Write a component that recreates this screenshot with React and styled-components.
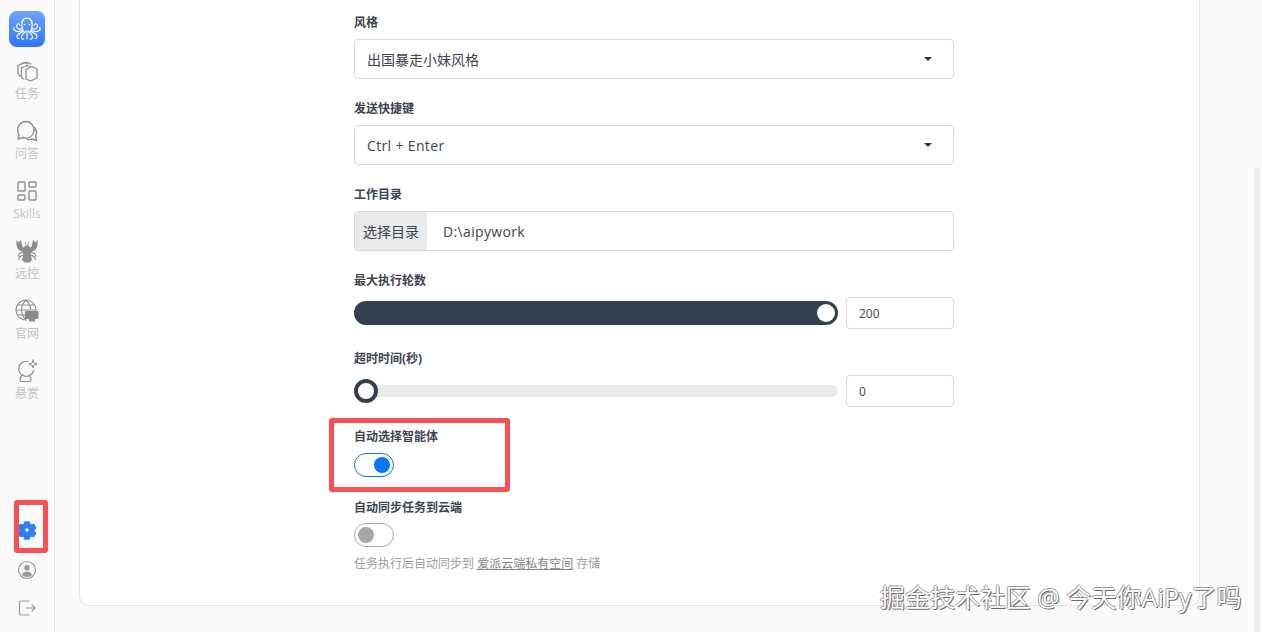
import React from 'react';
import styled, {createGlobalStyle} from 'styled-components';
import {LayoutDashboard} from 'lucide-react';

const GlobalStyle = createGlobalStyle`
    html, body {
        margin: 0;
        height: 100%;
        overflow: hidden;
        background: #fafafa;
    }
    * {
        box-sizing: border-box;
    }
    body {
        font-family: "Open Sans", "Noto Sans CJK SC", sans-serif;
    }
`;

const Shell = styled.div`
    display: flex;
    width: 1262px;
    height: 632px;
    position: relative;
    overflow: hidden;
`;

const Sidebar = styled.aside`
    width: 55px;
    flex: none;
    display: flex;
    flex-direction: column;
    align-items: center;
    padding-top: 11px;
    padding-bottom: 15px;
    background: #fafafa;
    border-right: 1px solid #e4e4e4;
`;

const Logo = styled.div`
    width: 36px;
    height: 36px;
    border-radius: 8px;
    background: linear-gradient(180deg, #6fa4fb 0%, #2f74fb 100%);
    display: flex;
    align-items: center;
    justify-content: center;
    margin-bottom: 12px;
`;

const NavList = styled.nav`
    display: flex;
    flex-direction: column;
    align-items: center;
    gap: 20px;
`;

const NavItem = styled.div`
    height: 40px;
    width: 40px;
    display: flex;
    flex-direction: column;
    align-items: center;
    color: #8f8f8f;
`;

const NavIcon = styled.div`
    width: 24px;
    height: 24px;
    flex: none;
    display: flex;
    align-items: center;
    justify-content: center;
`;

const NavLabel = styled.span`
    font-size: 12px;
    line-height: 16px;
    margin-top: 3px;
    color: #c2c2c2;
    white-space: nowrap;
`;

const BottomIcons = styled.div`
    margin-top: auto;
    display: flex;
    flex-direction: column;
    align-items: center;
    gap: 19px;
`;

const Main = styled.main`
    flex: 1;
    padding: 0 62px 26px 24px;
    background: #fafafa;
    display: flex;
`;

const Card = styled.section`
    flex: 1;
    background: #fff;
    border: 1px solid #e6e6e6;
    border-top: none;
    border-radius: 0 0 10px 10px;
    padding: 14px 0 0 274px;
`;

const Form = styled.div`
    width: 600px;
    display: flex;
    flex-direction: column;
`;

const Field = styled.div`
    display: flex;
    flex-direction: column;
    margin-bottom: ${(p) => p.$gap ?? 21}px;
`;

const Label = styled.label`
    font-size: 12px;
    line-height: 17px;
    font-weight: 700;
    color: #3d4451;
    margin-bottom: ${(p) => p.$gap ?? 8}px;
`;

const SelectBox = styled.div`
    height: 40px;
    border: 1px solid #d9d9d9;
    border-radius: 4px;
    padding: 0 21px 0 12px;
    display: flex;
    align-items: center;
    justify-content: space-between;
    font-size: 14px;
    color: #3d4451;
    background: #fff;
`;

const LatinValue = styled.span`
    letter-spacing: 0.35px;
`;

const Caret = styled.span`
    width: 0;
    height: 0;
    border-left: 4px solid transparent;
    border-right: 4px solid transparent;
    border-top: 4px solid #333;
`;

const InputGroup = styled.div`
    height: 40px;
    display: flex;
    border: 1px solid #d9d9d9;
    border-radius: 4px;
    overflow: hidden;
    font-size: 14px;
    color: #3d4451;
`;

const Addon = styled.div`
    width: 72px;
    background: #e9eaec;
    display: flex;
    align-items: center;
    justify-content: center;
`;

const PathValue = styled.div`
    padding-left: 16px;
    display: flex;
    align-items: center;
`;

const SliderRow = styled.div`
    display: flex;
    align-items: center;
    gap: 8px;
`;

const SliderBox = styled.div`
    width: 484px;
    height: 24px;
    position: relative;
    display: flex;
    align-items: center;
`;

const FullTrack = styled.div`
    width: 100%;
    height: 24px;
    border-radius: 12px;
    background: #343f4f;
`;

const EmptyTrack = styled.div`
    width: 100%;
    height: 12px;
    border-radius: 6px;
    background: #eaeaea;
`;

const KnobEnd = styled.span`
    position: absolute;
    right: 3px;
    top: 3px;
    width: 18px;
    height: 18px;
    border-radius: 50%;
    background: #fff;
`;

const KnobStart = styled.span`
    position: absolute;
    left: 0;
    top: 0;
    width: 24px;
    height: 24px;
    border-radius: 50%;
    background: #fff;
    border: 4px solid #343f4f;
`;

const NumberBox = styled.div`
    width: 108px;
    height: 32px;
    border: 1px solid #d9d9d9;
    border-radius: 4px;
    padding-left: 12px;
    display: flex;
    align-items: center;
    font-size: 12px;
    color: #3d4451;
`;

const Toggle = styled.div`
    width: 40px;
    height: 24px;
    border-radius: 12px;
    border: 1px solid ${(p) => (p.$on ? '#0d72ea' : '#a9abae')};
    background: #fff;
    display: flex;
    align-items: center;
    justify-content: ${(p) => (p.$on ? 'flex-end' : 'flex-start')};
    padding: 0 3px;
`;

const ToggleDot = styled.span`
    width: 16px;
    height: 16px;
    border-radius: 50%;
    background: ${(p) => (p.$on ? '#0b73f6' : '#a6a8ab')};
`;

const Hint = styled.div`
    font-size: 12px;
    line-height: 17px;
    color: #9a9da3;
    margin-top: 8px;
`;

const HintLink = styled.span`
    text-decoration: underline;
    color: #80848b;
`;

const RedBox = styled.div`
    position: absolute;
    border: 5px solid #f55157;
    border-radius: 3px;
    left: ${(p) => p.$x}px;
    top: ${(p) => p.$y}px;
    width: ${(p) => p.$w}px;
    height: ${(p) => p.$h}px;
`;

const Watermark = styled.div`
    position: absolute;
    left: 880px;
    top: 582px;
    font-size: 25px;
    line-height: 30px;
    letter-spacing: 0.1px;
    color: #fdfdfd;
    white-space: nowrap;
    text-shadow: 1px 1px 0 #6a6a6a, -1px 0 0 #9a9a9a, 0 -1px 0 #9a9a9a;
`;

const ScrollThumb = styled.div`
    position: absolute;
    right: 2px;
    top: 168px;
    bottom: 0;
    width: 6px;
    background: #efefef;
`;

const stroke = {fill: 'none', stroke: 'currentColor', strokeWidth: 1.5, strokeLinecap: 'round', strokeLinejoin: 'round'};

const OctopusIcon = () => (
    <svg width="30" height="26" viewBox="0 0 30 26" fill="none" stroke="#fff" strokeWidth="1.2" strokeLinecap="round" strokeLinejoin="round">
        <path d="M10.500 13C8.500 6 11 2 15 2s6.500 4 4.500 11" />
        <path d="M12.500 8.500h.01M17.500 8.500h.01" strokeWidth="1.6" />
        <path d="M10.500 12c-2 1.500-4.500 1.500-5.500-.5-.7-1.500-.5-3 .8-3.500 1 -.4 2 .3 2 1.300" />
        <path d="M19.500 12c2 1.500 4.500 1.500 5.500-.5.700-1.500.5-3-.8-3.500-1-.4-2 .3-2 1.300" />
        <path d="M11 14c-2.500 1.500-6 2-8 .5-1.200-.9-1.500-2-.8-3" />
        <path d="M19 14c2.500 1.500 6 2 8 .5 1.200-.9 1.500-2 .8-3" />
        <path d="M11.500 15c-2 2-6 2.500-6.500 5 -.2 1.300.5 2.500 2 2.500" />
        <path d="M18.500 15c2 2 6 2.500 6.500 5 .2 1.300-.5 2.500-2 2.500" />
        <path d="M13.500 15c-1 2.500-4 3.500-4 6 0 1.500 1 2.500 2.300 2" />
        <path d="M16.500 15c1 2.500 4 3.500 4 6 0 1.500-1 2.500-2.300 2" />
        <path d="M15 15v8" />
    </svg>
);

const TasksIcon = () => (
    <svg width="24" height="24" viewBox="0 0 24 24" {...stroke} strokeWidth="1.3">
        <path d="M3 6.500 9 3.500l4 1.500" />
        <path d="M3 6.500v7c0 1.500 1 3 3 4" />
        <path d="M6.500 5 12 3l4 2" />
        <path d="M6.500 9 12 6.500l3 1" />
        <path d="M6.500 9v8c0 1.500 1 2.500 2.500 3" />
        <path d="M11 10.500 17 7.500l5 2.500v9l-6.500 3L11 20z" />
    </svg>
);

const ChatIcon = () => (
    <svg width="24" height="24" viewBox="0 0 24 24" {...stroke} strokeWidth="1.4">
        <path d="M10.500 2.500a8.500 8.500 0 0 1 7.500 12.500 8.500 8.500 0 0 1-10 3.500L3 20l1-4.500A8.500 8.500 0 0 1 10.500 2.500z" />
        <path d="M19.500 8.500c2 2.500 2.500 6 1 8.500l1 4.500-4.500-1.500c-1.500.7-3 .8-4.500.5" />
    </svg>
);

const LobsterIcon = () => (
    <svg width="24" height="24" viewBox="0 0 24 24" fill="#8d8d8d">
        <path d="M1.500 1l2 2.500L6 1l1 4.500c.2 2 .5 3 2.500 4l1 2.500c-2.500 1-5 .5-6.500-1C1.500 8.500 1 5 1.500 1z" />
        <path d="M22.500 1l-2 2.500L18 1l-1 4.500c-.2 2-.5 3-2.500 4l-1 2.500c2.500 1 5 .5 6.500-1 2.500-2.500 3-6 2.500-10.500z" />
        <ellipse cx="12" cy="12" rx="4.500" ry="5.500" />
        <path d="M8.500 15h7l1.500 6-2.500 2.500h-5L7 21z" />
        <path d="M8 13l-3.500 1.500-1.500 3M16 13l3.500 1.500 1.500 3M8 16l-3.500 2-1 2.500M16 16l3.500 2 1 2.500" stroke="#8d8d8d" strokeWidth="1.200" fill="none" />
        <path d="M10.500 3l.8 4M13.500 3l-.8 4" stroke="#8d8d8d" strokeWidth="0.800" fill="none" />
    </svg>
);

const GlobeIcon = () => (
    <svg width="24" height="24" viewBox="0 0 24 24">
        <g {...stroke} strokeWidth="1.1">
            <path d="M11 21a10 10 0 1 1 10-10" />
            <path d="M1 11h20M2.500 6h17M2.500 16h7" />
            <path d="M11 1c-6 6-6 14 0 20M11 1c3.500 3.500 4.500 6.500 4.500 9" />
        </g>
        <rect x="10" y="12" width="13.500" height="8" rx="1" fill="#8a8a8a" />
        <rect x="14" y="20" width="6" height="2.500" fill="#8a8a8a" />
    </svg>
);

const BallIcon = () => (
    <svg width="24" height="24" viewBox="0 0 24 24" {...stroke} strokeWidth="1.2">
        <path d="M13 2.500a7.500 7.500 0 1 0 5.500 9" />
        <path d="M8 15.500c-2 1.500-3 3.500-3 5.500 0 1 .5 1.500 1.500 1.500h8c1 0 1.500-.5 1.500-1.500 0-2-1-3.500-2-5" />
        <path d="M18 1l1 3 3 1-3 1-1 3-1-3-3-1 3-1z" strokeWidth="1" />
    </svg>
);

const GearIcon = () => (
    <svg width="22" height="22" viewBox="0 0 22 22">
        <path
            fill="#2f7ff0"
            stroke="#2f7ff0"
            strokeWidth="1.500"
            strokeLinejoin="round"
            fillRule="evenodd"
            d="M9 3h4l.6 2.200 1.700 1 2.300-.6 2 3.400-1.700 1.700v1.600l1.700 1.700-2 3.400-2.300-.6-1.700 1-.6 2.200H9l-.6-2.200-1.700-1-2.300.6-2-3.400 1.700-1.700v-1.600L2.400 9l2-3.400 2.300.6 1.700-1zM11 8.600a2.400 2.400 0 1 0 0 4.800 2.400 2.400 0 0 0 0-4.800z"
        />
    </svg>
);

const UserIcon = () => (
    <svg width="20" height="20" viewBox="0 0 20 20">
        <circle cx="10" cy="10" r="8.500" fill="none" stroke="#9a9a9a" strokeWidth="1.200" />
        <circle cx="10" cy="7.800" r="2.800" fill="#9a9a9a" />
        <path d="M4.800 15c.6-2.400 2.600-3.600 5.200-3.600s4.600 1.200 5.200 3.600A7.500 7.500 0 0 1 10 17a7.500 7.500 0 0 1-5.200-2z" fill="#9a9a9a" />
    </svg>
);

const ExitIcon = () => (
    <svg width="20" height="18" viewBox="0 0 20 18" fill="none" stroke="#9a9a9a" strokeWidth="1.200" strokeLinecap="round" strokeLinejoin="round">
        <path d="M12 2H4a1.500 1.500 0 0 0-1.500 1.500v11A1.500 1.500 0 0 0 4 16h8" />
        <path d="M9 9h9M15 6l3 3-3 3" />
    </svg>
);

const navItems = [
    {label: '任务', icon: <TasksIcon />},
    {label: '问答', icon: <ChatIcon />},
    {label: 'Skills', icon: <LayoutDashboard size={24} strokeWidth={1.4} />},
    {label: '远控', icon: <LobsterIcon />},
    {label: '官网', icon: <GlobeIcon />},
    {label: '悬赏', icon: <BallIcon />},
];

const App = () => {
    return (
        <Shell>
            <GlobalStyle />
            <Sidebar>
                <Logo><OctopusIcon /></Logo>
                <NavList>
                    {navItems.map((item) => (
                        <NavItem key={item.label}>
                            <NavIcon>{item.icon}</NavIcon>
                            <NavLabel>{item.label}</NavLabel>
                        </NavItem>
                    ))}
                </NavList>
                <BottomIcons>
                    <GearIcon />
                    <UserIcon />
                    <ExitIcon />
                </BottomIcons>
            </Sidebar>
            <Main>
                <Card>
                    <Form>
                        <Field>
                            <Label>风格</Label>
                            <SelectBox>出国暴走小妹风格<Caret /></SelectBox>
                        </Field>
                        <Field>
                            <Label>发送快捷键</Label>
                            <SelectBox><LatinValue>Ctrl + Enter</LatinValue><Caret /></SelectBox>
                        </Field>
                        <Field>
                            <Label>工作目录</Label>
                            <InputGroup>
                                <Addon>选择目录</Addon>
                                <PathValue><LatinValue>D:\aipywork</LatinValue></PathValue>
                            </InputGroup>
                        </Field>
                        <Field>
                            <Label>最大执行轮数</Label>
                            <SliderRow>
                                <SliderBox>
                                    <FullTrack />
                                    <KnobEnd />
                                </SliderBox>
                                <NumberBox>200</NumberBox>
                            </SliderRow>
                        </Field>
                        <Field>
                            <Label>超时时间(秒)</Label>
                            <SliderRow>
                                <SliderBox>
                                    <EmptyTrack />
                                    <KnobStart />
                                </SliderBox>
                                <NumberBox>0</NumberBox>
                            </SliderRow>
                        </Field>
                        <Field $gap={22}>
                            <Label>自动选择智能体</Label>
                            <Toggle $on><ToggleDot $on /></Toggle>
                        </Field>
                        <Field $gap={0}>
                            <Label $gap={7}>自动同步任务到云端</Label>
                            <Toggle><ToggleDot /></Toggle>
                            <Hint>任务执行后自动同步到 <HintLink>爱派云端私有空间</HintLink> 存储</Hint>
                        </Field>
                    </Form>
                </Card>
            </Main>
            <ScrollThumb />
            <RedBox $x={329} $y={418} $w={181} $h={74} />
            <RedBox $x={14} $y={500} $w={34} $h={53} />
            <Watermark>掘金技术社区 @ 今天你AiPy了吗</Watermark>
        </Shell>
    );
};

export default App;
